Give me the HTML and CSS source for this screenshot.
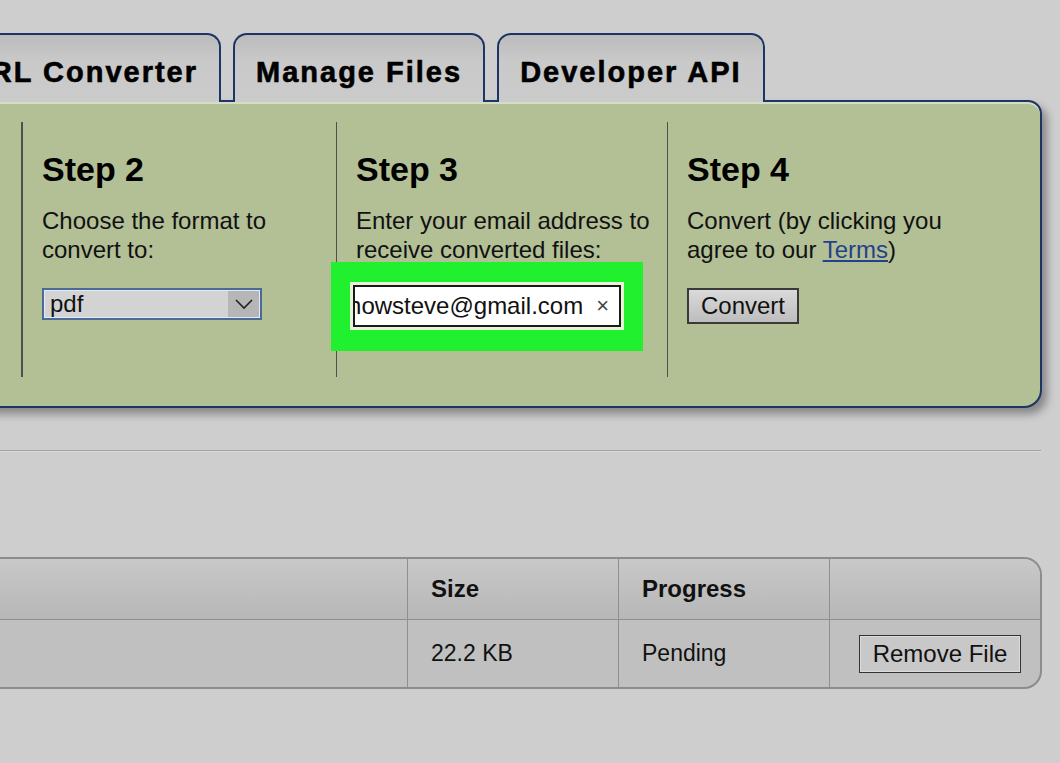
FILE: index.html
```html
<!DOCTYPE html>
<html>
<head>
  <title>File Converter</title>
  <link rel="stylesheet" href="styles.css">
</head>
<body>
  <div class="tabs">
    <div class="tab tab-first"><span>URL Converter</span></div>
    <div class="tab">Manage Files</div>
    <div class="tab">Developer API</div>
  </div>

  <div class="panel">
    <div class="step step-first"></div>

    <div class="step">
      <h2>Step 2</h2>
      <p>Choose the format to<br>convert to:</p>
      <div class="select">
        <span class="select-value">pdf</span>
        <span class="select-arrow">
          <svg width="20" height="12" viewBox="0 0 20 12"><path d="M2 2 L10 10 L18 2" fill="none" stroke="#222" stroke-width="1.6"/></svg>
        </span>
      </div>
    </div>

    <div class="step">
      <h2>Step 3</h2>
      <p>Enter your email address to<br>receive converted files:</p>
      <div class="highlight">
        <div class="email">
          <div class="email-text"><span>wikihowsteve@gmail.com</span></div>
          <span class="email-clear">&times;</span>
        </div>
      </div>
    </div>

    <div class="step">
      <h2>Step 4</h2>
      <p>Convert (by clicking you<br>agree to our <a href="#">Terms</a>)</p>
      <button class="btn convert-btn">Convert</button>
    </div>
  </div>

  <hr class="rule">

  <table class="files">
    <colgroup>
      <col class="c-name">
      <col class="c-size">
      <col class="c-progress">
      <col class="c-action">
    </colgroup>
    <thead>
      <tr>
        <th class="col-name"></th>
        <th>Size</th>
        <th>Progress</th>
        <th></th>
      </tr>
    </thead>
    <tbody>
      <tr>
        <td class="col-name"></td>
        <td>22.2 KB</td>
        <td>Pending</td>
        <td class="col-action"><button class="btn remove-btn">Remove File</button></td>
      </tr>
    </tbody>
  </table>
</body>
</html>
```

FILE: styles.css
```css
body {
  margin: 0;
  background-color: #cecece;
  font-family: "Liberation Sans", Arial, sans-serif;
  color: #111;
  overflow: hidden;
}

/* tabs on top of the panel */
.tabs {
  display: flex;
  gap: 12px;
  padding-top: 33px;
  margin-left: -19px;
  position: relative;
  z-index: 2;
}

.tab {
  height: 69px;
  box-sizing: border-box;
  border: 2px solid #1d3564;
  border-bottom: none;
  border-radius: 14px 14px 0 0;
  background: linear-gradient(#bcbcbc, #c9c9c9 40%, #cbcbcb);
  padding: 0 21px;
  font-size: 29px;
  font-weight: bold;
  letter-spacing: 2px;
  line-height: 74px;
  white-space: nowrap;
  color: #000;
  -webkit-text-stroke: 0.6px #000;
}

.tab-first {
  width: 240px;
  display: flex;
  justify-content: flex-end;
  overflow: hidden;
}

/* green panel */
.panel {
  margin-left: -20px;
  margin-top: -2px;
  width: 1062px;
  box-sizing: border-box;
  border: 2px solid #1d3564;
  border-radius: 0 14px 18px 0;
  background-color: #b3bf95;
  box-shadow: 5px 6px 8px rgba(0, 0, 0, 0.35), inset 0 2px 0 #d6dcc6;
  display: grid;
  grid-template-columns: 40px 314px 331px 1fr;
  padding: 20px 0 29px;
  position: relative;
  z-index: 1;
}

.step {
  box-sizing: border-box;
  border-left: 1px solid #4f4f4f;
  height: 255px;
  padding: 28px 0 0 19px;
}

.step-first {
  border-left: none;
  border-right: 1px solid #4f4f4f;
  padding: 0;
}

.step h2 {
  margin: 0;
  font-size: 34px;
  line-height: 39px;
  color: #000;
}

.step p {
  margin: 17px 0 0;
  font-size: 24px;
  line-height: 29px;
  color: #111;
}

.step a {
  color: #24428c;
}

.select {
  margin-top: 24px;
  width: 220px;
  height: 32px;
  box-sizing: border-box;
  border: 2px solid #4a6a98;
  box-shadow: inset 0 0 0 1px #e2ebf5;
  background-color: #d3d3d3;
  display: flex;
}

.select-value {
  flex: 1;
  padding-left: 6px;
  font-size: 24px;
  line-height: 27px;
}

.select-arrow {
  width: 31px;
  margin: 1px;
  background-color: #b6b6b6;
  display: flex;
  align-items: center;
  justify-content: center;
}

/* bright green highlight round the email box */
.highlight {
  margin: -2px 0 0 -25px;
  width: 312px;
  box-sizing: border-box;
  padding: 23px 22px 24px;
  background-color: #21f02f;
}

.email {
  height: 42px;
  box-sizing: border-box;
  border: 2px solid #1a1a1a;
  background-color: #fff;
  box-shadow: 0 0 0 3px #e4f6d6;
  display: flex;
  align-items: center;
}

.email-text {
  flex: 1;
  display: flex;
  justify-content: flex-end;
  overflow: hidden;
  white-space: nowrap;
  font-size: 24px;
}

.email-clear {
  margin: 0 10px 0 13px;
  font-size: 22px;
  color: #444;
}

.btn {
  font-family: "Liberation Sans", Arial, sans-serif;
  font-size: 24px;
  color: #111;
  border: 2px solid #3a3a3a;
  background: linear-gradient(#dadada, #bdbdbd);
  padding: 0;
}

.convert-btn {
  margin-top: 24px;
  width: 112px;
  height: 36px;
}

.rule {
  margin: 42px 0 0;
  width: 1041px;
  border: none;
  border-top: 1px solid #a2a2a2;
  border-bottom: 1px solid #dadada;
}

/* files table */
.files {
  margin: 105px 0 0 -20px;
  width: 1062px;
  border-collapse: separate;
  border-spacing: 0;
  border: 2px solid #8c8c8c;
  border-left: none;
  border-radius: 0 18px 18px 0;
  overflow: hidden;
  table-layout: fixed;
  background-color: #c0c0c0;
}

.c-name { width: 427px; }
.c-size, .c-progress, .c-action { width: 211px; }

.files th, .files td {
  border-left: 1px solid #8f8f8f;
  padding: 0 0 0 23px;
  text-align: left;
}

.files .col-name {
  border-left: none;
}

.files th {
  height: 60px;
  font-size: 24px;
  background: linear-gradient(#c8c8c8, #b7b7b7);
  border-bottom: 1px solid #8f8f8f;
}

.files td {
  height: 67px;
  font-size: 23px;
}

.files .col-action {
  text-align: right;
  padding: 0 19px 0 0;
}

.remove-btn {
  width: 162px;
  height: 38px;
  border: 1px solid #333;
  box-shadow: inset 0 0 0 1px #dcdcdc;
  background: #c8c8c8;
}
```
